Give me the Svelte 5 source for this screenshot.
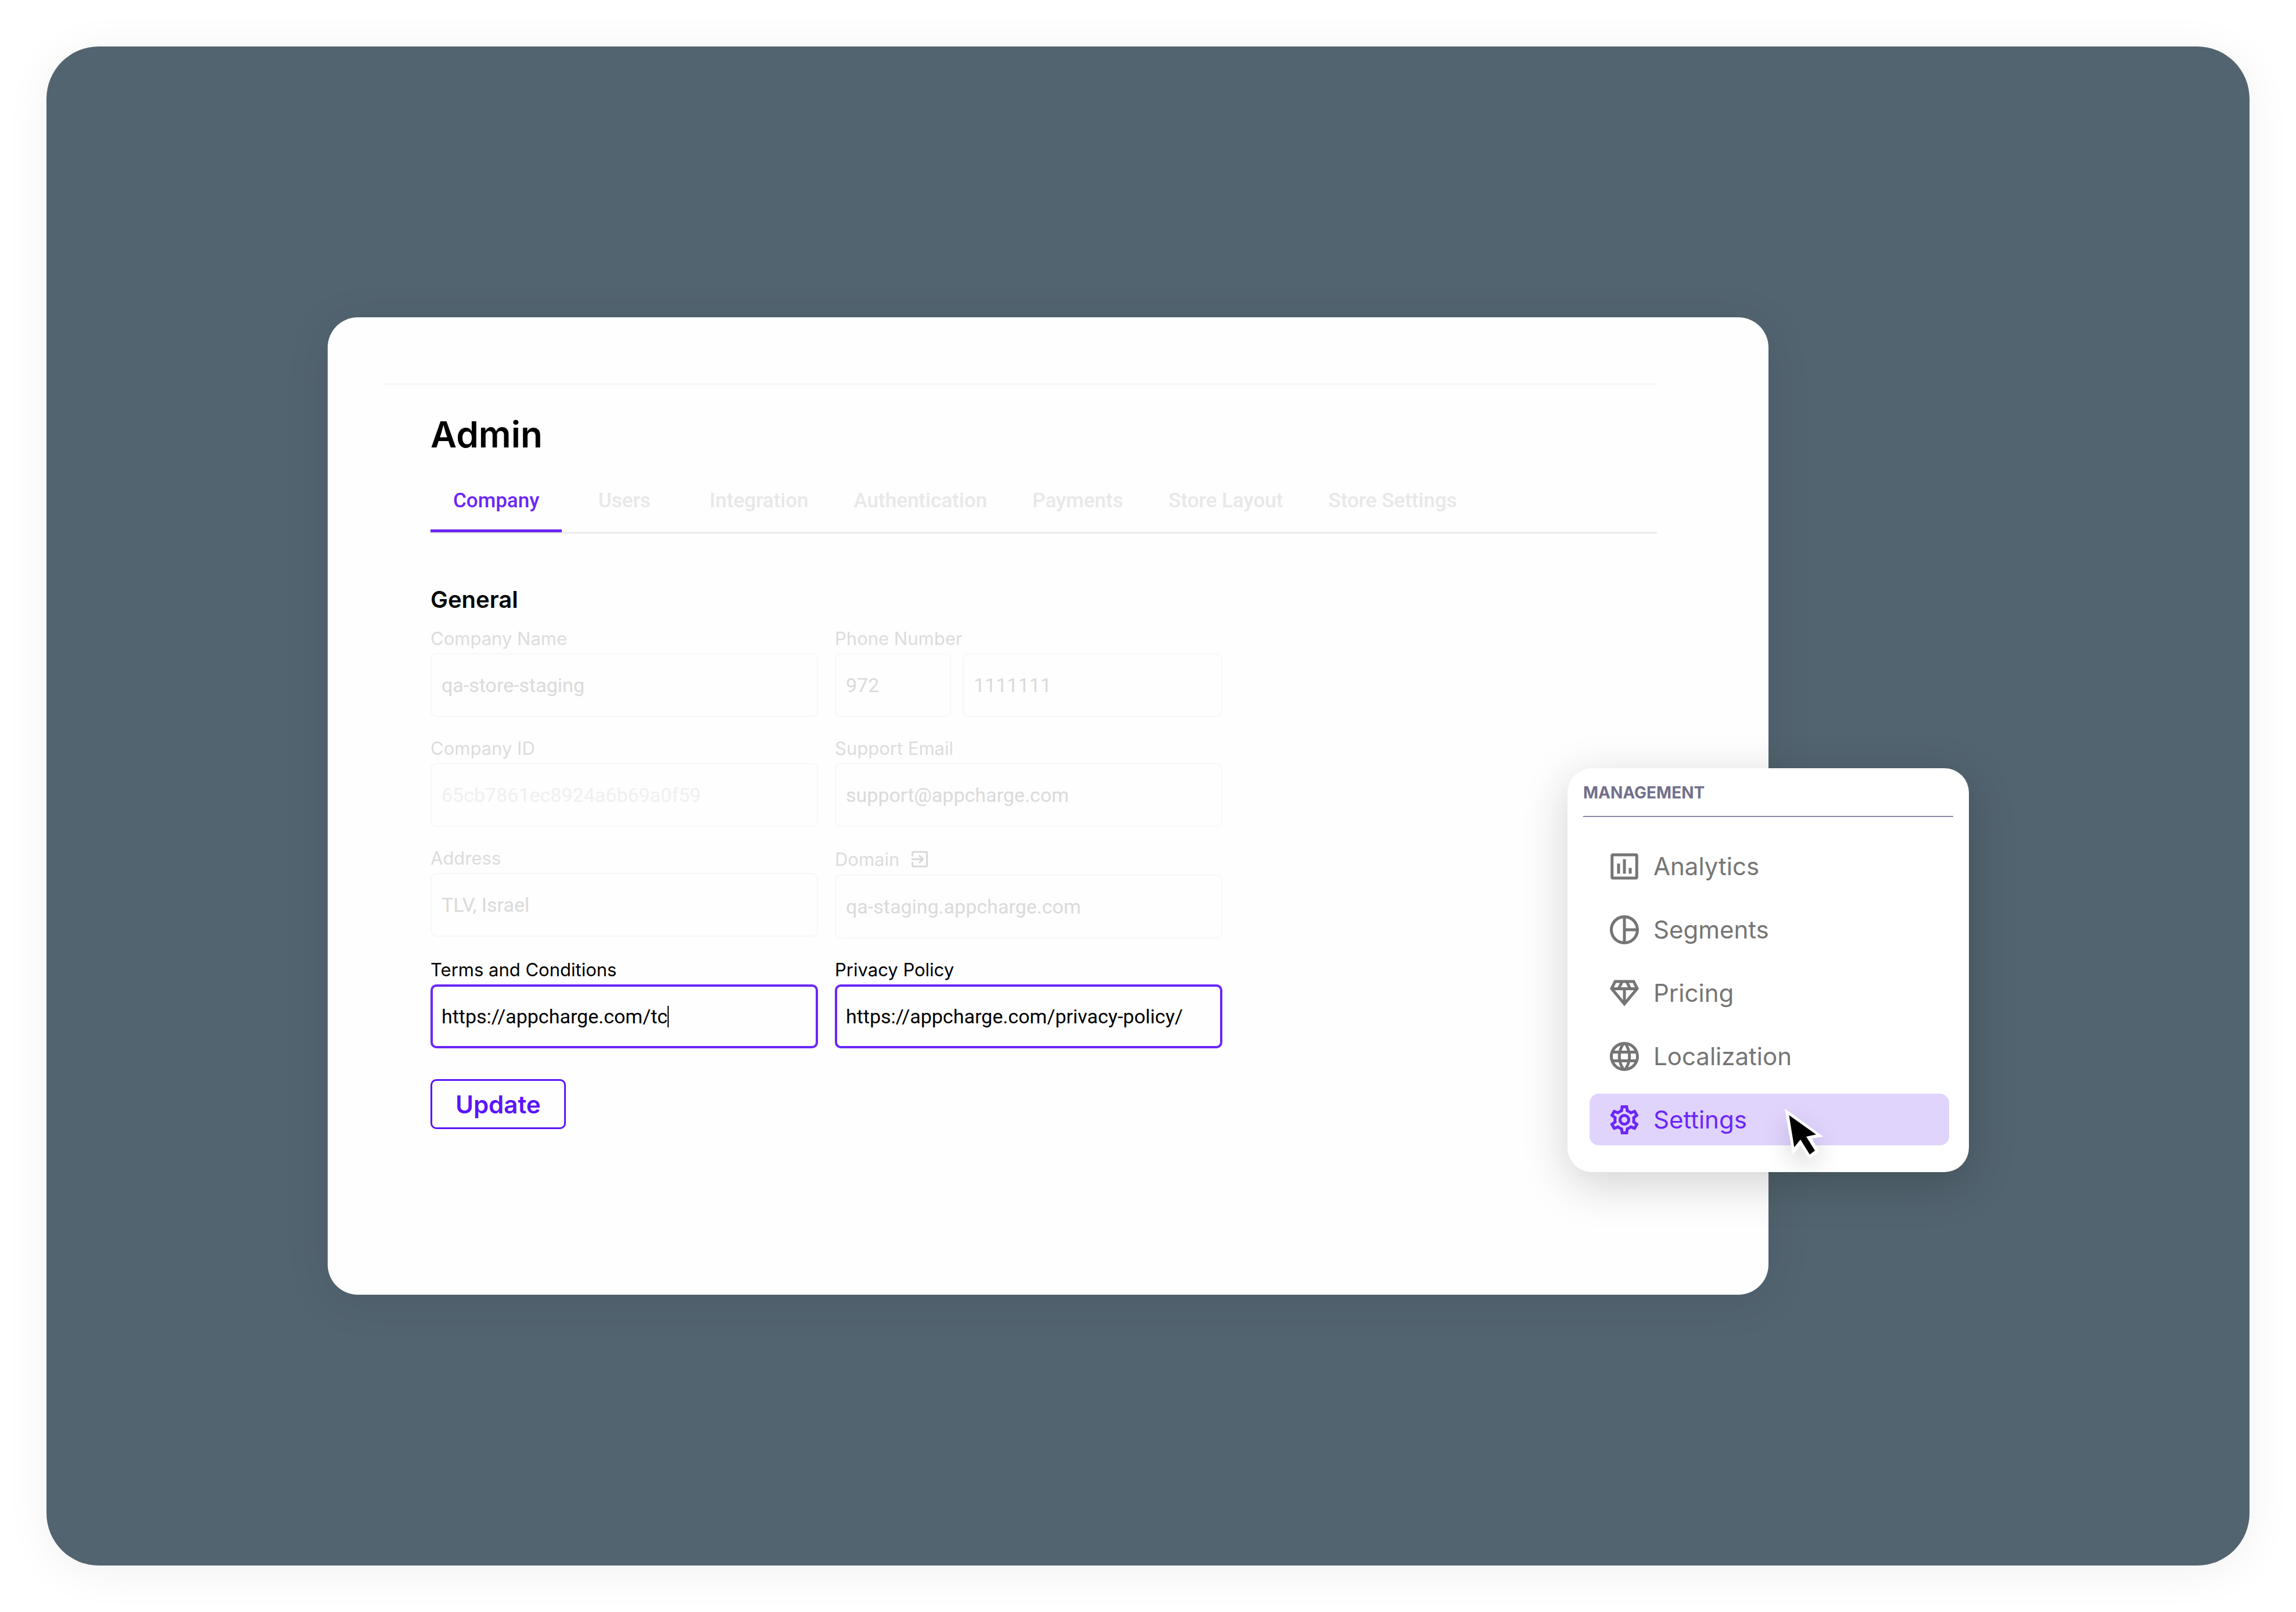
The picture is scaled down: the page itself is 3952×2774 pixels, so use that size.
<script>
  let activeTab = 'Company'
  let activeItem = 'Settings'

  let company = 'qa-store-staging'
  let companyId = '65cb7861ec8924a6b69a0f59'
  let address = 'TLV, Israel'
  let terms = 'https://appcharge.com/tc'
  let prefix = '972'
  let phone = '1111111'
  let email = 'support@appcharge.com'
  let domain = 'qa-staging.appcharge.com'
  let privacy = 'https://appcharge.com/privacy-policy/'

  const tabs = [
    'Company',
    'Users',
    'Integration',
    'Authentication',
    'Payments',
    'Store Layout',
    'Store Settings'
  ]

  // 24x24 icon paths
  const items = [
    {
      name: 'Analytics',
      path: 'M20 3H4C3.2 3 2.5 3.7 2.5 4.5v15c0 .8.7 1.5 1.5 1.5h16c.8 0 1.5-.7 1.5-1.5v-15C21.5 3.7 20.8 3 20 3zM19.5 19h-15V5h15v14zM7 10h2v7H7zM11 7h2v10h-2zM15 13h2v4h-2z'
    },
    {
      name: 'Segments',
      path: 'M12 2C6.48 2 2 6.48 2 12s4.48 10 10 10 10-4.48 10-10S17.52 2 12 2zm1 2.07c3.61.45 6.48 3.33 6.93 6.93H13V4.07zM4 12c0-4.06 3.07-7.44 7-7.93v15.87c-3.93-.5-7-3.88-7-7.94zm9 7.93V13h6.93c-.45 3.61-3.32 6.48-6.93 6.93z'
    },
    {
      name: 'Pricing',
      path: 'M19 3H5L2 9l10 12L22 9l-3-6zM9.62 8l1.5-3h1.76l1.5 3H9.62zM11 10v6.68L5.44 10H11zm2 0h5.56L13 16.68V10zm6.26-2h-2.65l-1.5-3h2.65l1.5 3zM6.24 5h2.65l-1.5 3H4.74l1.5-3z'
    },
    {
      name: 'Localization',
      path: 'M11.99 2C6.47 2 2 6.48 2 12s4.47 10 9.99 10C17.52 22 22 17.52 22 12S17.52 2 11.99 2zm6.93 6h-2.95c-.32-1.25-.78-2.45-1.38-3.56 1.84.63 3.37 1.91 4.33 3.56zM12 4.04c.83 1.2 1.48 2.53 1.91 3.96h-3.82c.43-1.43 1.08-2.76 1.91-3.96zM4.26 14C4.1 13.36 4 12.69 4 12s.1-1.36.26-2h3.38c-.08.66-.14 1.32-.14 2 0 .68.06 1.34.14 2H4.26zm.82 2h2.95c.32 1.25.78 2.45 1.38 3.56-1.84-.63-3.37-1.9-4.33-3.56zm2.95-8H5.08c.96-1.66 2.49-2.93 4.33-3.56C8.81 5.55 8.35 6.75 8.03 8zM12 19.96c-.83-1.2-1.48-2.53-1.91-3.96h3.82c-.43 1.43-1.08 2.76-1.91 3.96zM14.34 14H9.66c-.09-.66-.16-1.32-.16-2 0-.68.07-1.35.16-2h4.68c.09.65.16 1.32.16 2 0 .68-.07 1.34-.16 2zm.25 5.56c.6-1.11 1.06-2.31 1.38-3.56h2.95c-.96 1.65-2.49 2.93-4.33 3.56zM16.36 14c.08-.66.14-1.32.14-2 0-.68-.06-1.34-.14-2h3.38c.16.64.26 1.31.26 2s-.1 1.36-.26 2h-3.38z'
    },
    {
      name: 'Settings',
      path: 'M19.43 12.98c.04-.32.07-.64.07-.98 0-.34-.03-.66-.07-.98l2.11-1.65c.19-.15.24-.42.12-.64l-2-3.46c-.09-.16-.26-.25-.44-.25-.06 0-.12.01-.17.03l-2.49 1c-.52-.4-1.08-.73-1.69-.98l-.38-2.65C14.46 2.18 14.25 2 14 2h-4c-.25 0-.46.18-.49.42l-.38 2.65c-.61.25-1.17.59-1.69.98l-2.49-1c-.06-.02-.12-.03-.18-.03-.17 0-.34.09-.43.25l-2 3.46c-.13.22-.07.49.12.64l2.11 1.65c-.04.32-.07.65-.07.98 0 .33.03.66.07.98l-2.11 1.65c-.19.15-.24.42-.12.64l2 3.46c.09.16.26.25.44.25.06 0 .12-.01.17-.03l2.49-1c.52.4 1.08.73 1.69.98l.38 2.65c.03.24.24.42.49.42h4c.25 0 .46-.18.49-.42l.38-2.65c.61-.25 1.17-.59 1.69-.98l2.49 1c.06.02.12.03.18.03.17 0 .34-.09.43-.25l2-3.46c.12-.22.07-.49-.12-.64l-2.11-1.65zm-1.98-1.71c.04.31.05.52.05.73 0 .21-.02.43-.05.73l-.14 1.13.89.7 1.08.84-.7 1.21-1.27-.51-1.04-.42-.9.68c-.43.32-.84.56-1.25.73l-1.06.43-.16 1.13-.2 1.35h-1.4l-.19-1.35-.16-1.13-1.06-.43c-.43-.18-.83-.41-1.23-.71l-.91-.7-1.06.43-1.27.51-.7-1.21 1.08-.84.89-.7-.14-1.13c-.03-.31-.05-.54-.05-.74s.02-.43.05-.73l.14-1.13-.89-.7-1.08-.84.7-1.21 1.27.51 1.04.42.9-.68c.43-.32.84-.56 1.25-.73l1.06-.43.16-1.13.2-1.35h1.39l.19 1.35.16 1.13 1.06.43c.43.18.83.41 1.23.71l.91.7 1.06-.43 1.27-.51.7 1.21-1.07.85-.89.7.14 1.13zM12 8c-2.21 0-4 1.79-4 4s1.79 4 4 4 4-1.79 4-4-1.79-4-4-4zm0 6c-1.1 0-2-.9-2-2s.9-2 2-2 2 .9 2 2-.9 2-2 2z'
    }
  ]
</script>

<style>
  :global(body) {
    background: #fff;
  }

  .page {
    box-sizing: border-box;
    min-height: 100vh;
    padding: 80px;
    font-family: Inter, sans-serif;
  }

  .stage {
    box-sizing: border-box;
    min-height: calc(100vh - 160px);
    padding: 466px 828px 466px 484px;
    border-radius: 90px;
    background: #526470;
    box-shadow: 0 10px 80px rgba(0, 0, 0, .06);
  }

  .panel {
    position: relative;
    box-sizing: border-box;
    padding: 114px 192px 285px 95px;
    border-radius: 52px;
    background: #fefefe;
    box-shadow: 0 10px 80px rgba(0, 0, 0, .08);
  }

  .admin {
    padding-left: 82px;
    border-top: 2px solid #f4f4f4;
  }

  h1 {
    margin: 0;
    padding: 50px 0 20px;
    font-size: 62px;
    font-weight: 600;
    line-height: 72px;
  }

  .tabs {
    display: flex;
    border-bottom: 2px solid #e4e4e4;
  }

  .tabs button {
    box-sizing: border-box;
    min-width: 215px;
    height: 112px;
    padding: 7px 39px 0;
    border: none;
    border-bottom: 5px solid transparent;
    background: none;
    color: #e8e8e8;
    font-family: Roboto, sans-serif;
    font-size: 35px;
    font-weight: 500;
    cursor: pointer;
  }

  .tabs .active {
    border-bottom-color: #6b26f8;
    color: #6b26f8;
  }

  h2 {
    margin: 0;
    padding: 90px 0 25px;
    font-size: 40px;
    font-weight: 600;
    line-height: 48px;
  }

  .fields {
    display: grid;
    grid-template-columns: 1fr 1fr;
    gap: 36px 29px;
    width: 1363px;
  }

  .label {
    display: flex;
    align-items: center;
    gap: 20px;
    margin-bottom: 7px;
    color: #dcdcdc;
    font-size: 31px;
    line-height: 36px;
  }

  .label a {
    display: flex;
    color: #d8d8d8;
  }

  .label svg {
    width: 30px;
    height: 39px;
  }

  .box {
    position: relative;
    display: flex;
    gap: 20px;
  }

  input {
    box-sizing: border-box;
    width: 100%;
    min-width: 0;
    height: 110px;
    padding: 0 17px;
    border: 2px solid #f7f7f7;
    border-radius: 10px;
    outline: none;
    background: none;
    color: #dadada;
    font-family: Roboto, sans-serif;
    font-size: 34px;
  }

  .prefix {
    flex: none;
    width: 200px;
  }

  .faded {
    color: #f0f0f0;
  }

  .open .label,
  .open input {
    color: #000;
  }

  .open input {
    padding: 0 15px;
    border: 4px solid #6b26f8;
  }

  .caret {
    position: absolute;
    top: 37px;
    left: 408px;
    width: 2px;
    height: 37px;
    background: #000;
  }

  .update {
    height: 86px;
    margin-top: 53px;
    padding: 0 40px;
    border: 3px solid #5a14fa;
    border-radius: 10px;
    background: none;
    color: #5a14fa;
    font-family: inherit;
    font-size: 42px;
    font-weight: 600;
    cursor: pointer;
  }

  /* menu hangs over the right edge of the panel */
  .menu {
    position: absolute;
    top: 776px;
    right: -345px;
    box-sizing: border-box;
    width: 691px;
    padding: 24px 27px 46px;
    border-radius: 42px;
    background: #fff;
    box-shadow: 0 20px 80px rgba(0, 0, 0, .18);
  }

  .menu h3 {
    margin: 0;
    padding-bottom: 22px;
    border-bottom: 2px solid #8b89a0;
    color: #72708c;
    font-size: 28px;
    font-weight: 700;
    line-height: 36px;
  }

  .menu ul {
    display: grid;
    gap: 20px;
    margin: 40px 7px 0 11px;
    padding: 0;
    list-style: none;
  }

  .menu li a {
    display: flex;
    align-items: center;
    gap: 20px;
    height: 89px;
    padding: 0 30px;
    border-radius: 16px;
    color: #757575;
    font-size: 42px;
    text-decoration: none;
  }

  .menu li svg {
    width: 60px;
    height: 60px;
  }

  .menu li .current {
    background: #e0d4fd;
    color: #6b26f8;
  }

  .cursor {
    position: absolute;
    top: 568px;
    left: 352px;
    width: 110px;
    height: 120px;
    overflow: visible;
    filter: drop-shadow(0 16px 20px rgba(0, 0, 0, .15));
  }
</style>

<div class="page">
  <div class="stage">
    <main class="panel">
      <section class="admin">
        <h1>Admin</h1>
        <div class="tabs" role="tablist">
          {#each tabs as tab}
            <button
              role="tab"
              aria-selected={tab === activeTab}
              class:active={tab === activeTab}
              on:click={() => activeTab = tab}
            >{tab}</button>
          {/each}
        </div>

        <h2>General</h2>
        <form on:submit|preventDefault>
          <div class="fields">
            <div>
              <div class="label"><label for="company">Company Name</label></div>
              <div class="box"><input id="company" bind:value={company}></div>
            </div>
            <div>
              <div class="label"><label for="phone">Phone Number</label></div>
              <div class="box">
                <input class="prefix" aria-label="Country code" bind:value={prefix}>
                <input id="phone" bind:value={phone}>
              </div>
            </div>
            <div>
              <div class="label"><label for="company-id">Company ID</label></div>
              <div class="box"><input id="company-id" class="faded" bind:value={companyId} readonly></div>
            </div>
            <div>
              <div class="label"><label for="email">Support Email</label></div>
              <div class="box"><input id="email" bind:value={email}></div>
            </div>
            <div>
              <div class="label"><label for="address">Address</label></div>
              <div class="box"><input id="address" bind:value={address}></div>
            </div>
            <div>
              <div class="label">
                <label for="domain">Domain</label>
                <a href="#domain" aria-label="Open domain">
                  <svg viewBox="0 0 30 30" fill="none" stroke="currentColor" stroke-width="3">
                    <path d="M2.5 10V4.5a2 2 0 0 1 2-2h21a2 2 0 0 1 2 2v21a2 2 0 0 1-2 2h-21a2 2 0 0 1-2-2V20M1 15h19M14 8.500l6.500 6.500-6.500 6.500" />
                  </svg>
                </a>
              </div>
              <div class="box"><input id="domain" bind:value={domain}></div>
            </div>
            <div class="open">
              <div class="label"><label for="terms">Terms and Conditions</label></div>
              <div class="box">
                <input id="terms" bind:value={terms}>
                <span class="caret"></span>
              </div>
            </div>
            <div class="open">
              <div class="label"><label for="privacy">Privacy Policy</label></div>
              <div class="box"><input id="privacy" bind:value={privacy}></div>
            </div>
          </div>
          <button class="update">Update</button>
        </form>
      </section>

      <nav class="menu">
        <h3>MANAGEMENT</h3>
        <ul>
          {#each items as item}
            <li>
              <a
                href="#{item.name.toLowerCase()}"
                class:current={item.name === activeItem}
                on:click={() => activeItem = item.name}
              >
                <svg viewBox="0 0 24 24" fill="currentColor"><path fill-rule="evenodd" d={item.path} /></svg>
                {item.name}
              </a>
            </li>
          {/each}
        </ul>
        <svg class="cursor" viewBox="0 0 330 360">
          <path fill="#fff" d="M66 53L266 198L207 207L243 277L193 312L147 243L107 292Z" />
          <path d="M88 87L228 187L177 198L222 270L195 290L147 213L115 253Z" />
        </svg>
      </nav>
    </main>
  </div>
</div>
